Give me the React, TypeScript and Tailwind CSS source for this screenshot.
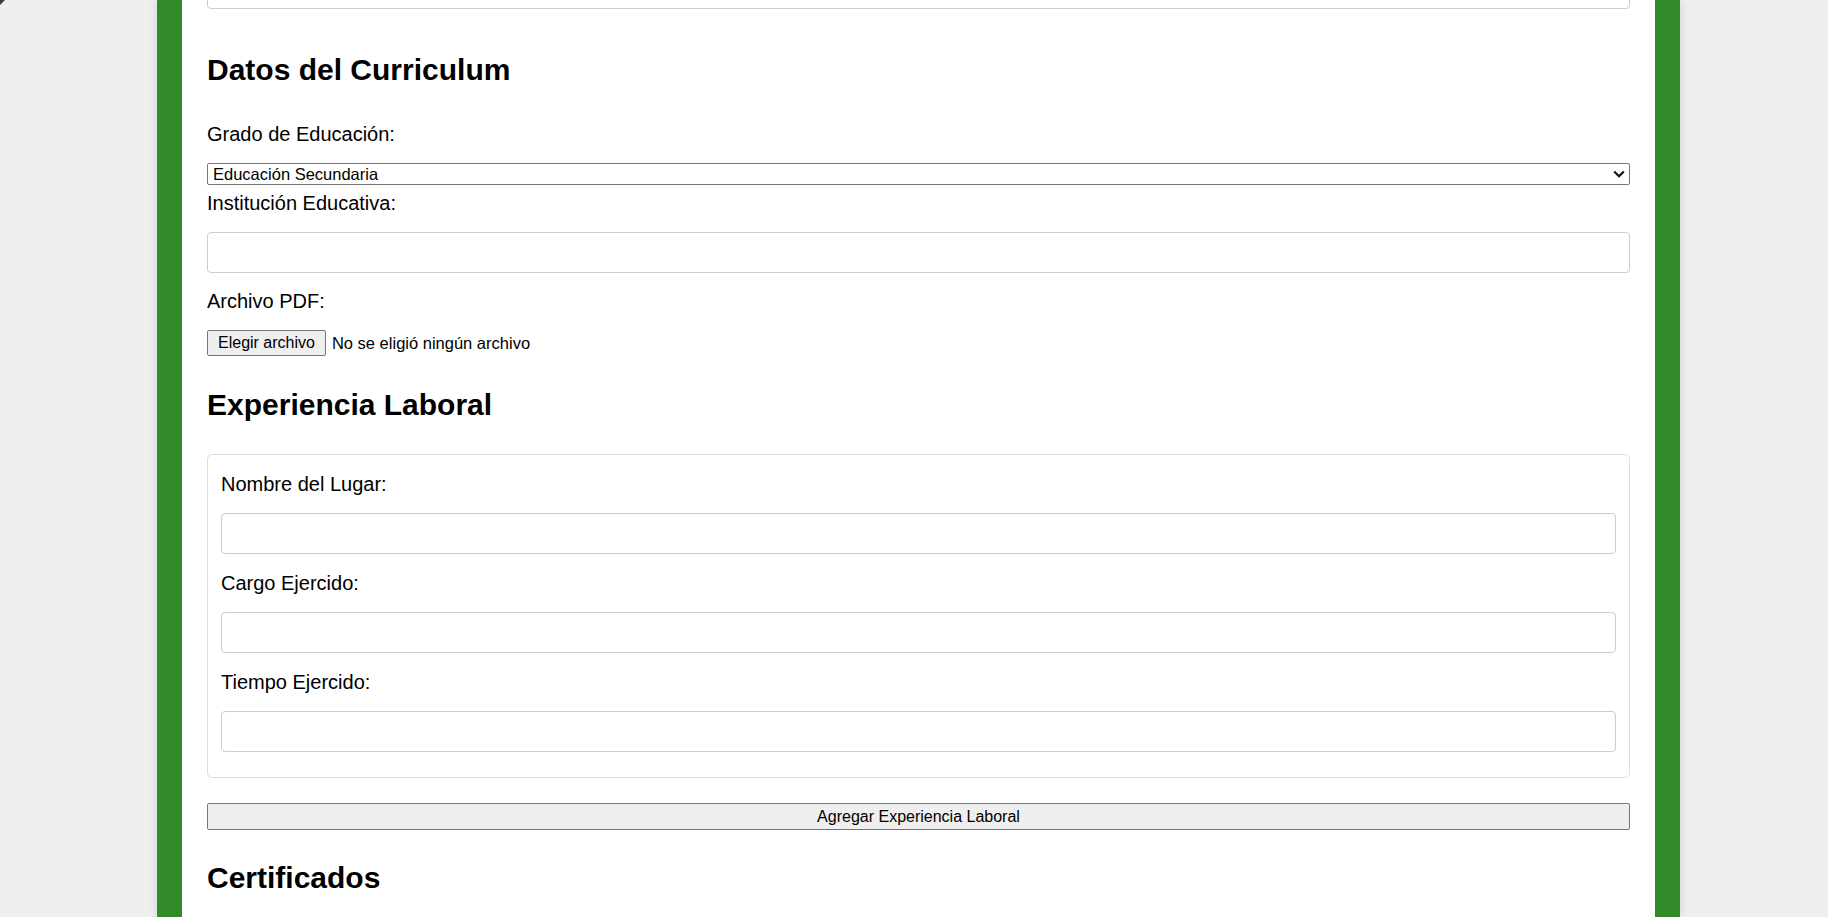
import React from "react";

const labelCls = "block text-[20px] leading-[23px] text-black";
const inputCls = "block w-full h-[41px] border border-[#cccccc] rounded-[4px] bg-white";
const headingCls = "text-[30px] leading-[34px] font-bold text-black";

function Field({ label, first }: { label: string; first?: boolean }) {
  return (
    <>
      <label className={`${labelCls} ${first ? "" : "mt-[18px]"}`}>{label}</label>
      <input type="text" className={`${inputCls} mt-[17px] outline-none`} />
    </>
  );
}

export default function App() {
  return (
    <div className="relative h-[917px] overflow-hidden bg-[#efefef] font-['Liberation_Sans',Arial,sans-serif]">
      {/* window corner artifact */}
      <svg className="absolute left-0 top-0" width="6" height="6" viewBox="0 0 6 6">
        <polygon points="0,0 5,0 0,5" fill="#3b3b3b" />
      </svg>

      <div className="flow-root ml-[157px] w-[1523px] h-[917px] bg-white border-x-[25px] border-[#338a2b] px-[25px] shadow-[0_0_10px_rgba(0,0,0,0.12)]">
        {/* tail of the previous input, scrolled off */}
        <div className={`${inputCls} -mt-[32px]`} />

        <h2 className={`${headingCls} mt-[44px]`}>Datos del Curriculum</h2>

        <label className={`${labelCls} mt-[36px]`}>Grado de Educación:</label>
        <div className="mt-[17px] h-[22px] flex items-center justify-between border border-[#767676] rounded-[2px] pl-[5px] pr-[4px] bg-white">
          <span className="text-[16.5px] leading-[18px] text-black">Educación Secundaria</span>
          <svg width="12" height="8" viewBox="0 0 12 8" fill="none">
            <path d="M1.2 1.5 L6 6.2 L10.8 1.5" stroke="#111" strokeWidth="2.2" />
          </svg>
        </div>

        <label className={`${labelCls} mt-[7px]`}>Institución Educativa:</label>
        <input type="text" className={`${inputCls} mt-[17px] outline-none`} />

        <label className={`${labelCls} mt-[17px]`}>Archivo PDF:</label>
        <div className="mt-[17px] flex items-center h-[26px]">
          <button className="h-[26px] px-[10px] border border-[#767676] rounded-[2px] bg-[#efefef] text-[16px] leading-[18px] text-black">
            Elegir archivo
          </button>
          <span className="ml-[6px] text-[16.5px] leading-[18px] text-black">No se eligió ningún archivo</span>
        </div>

        <h2 className={`${headingCls} mt-[32px]`}>Experiencia Laboral</h2>

        <div className="mt-[32px] border border-[#dddddd] rounded-[5px] px-[13px] pt-[18px] pb-[25px]">
          <Field label="Nombre del Lugar:" first />
          <Field label="Cargo Ejercido:" />
          <Field label="Tiempo Ejercido:" />
        </div>

        <button className="mt-[25px] w-full h-[27px] border border-[#767676] rounded-[2px] bg-[#efefef] text-[16px] leading-[18px] text-black">
          Agregar Experiencia Laboral
        </button>

        <h2 className={`${headingCls} mt-[31px]`}>Certificados</h2>
      </div>
    </div>
  );
}
